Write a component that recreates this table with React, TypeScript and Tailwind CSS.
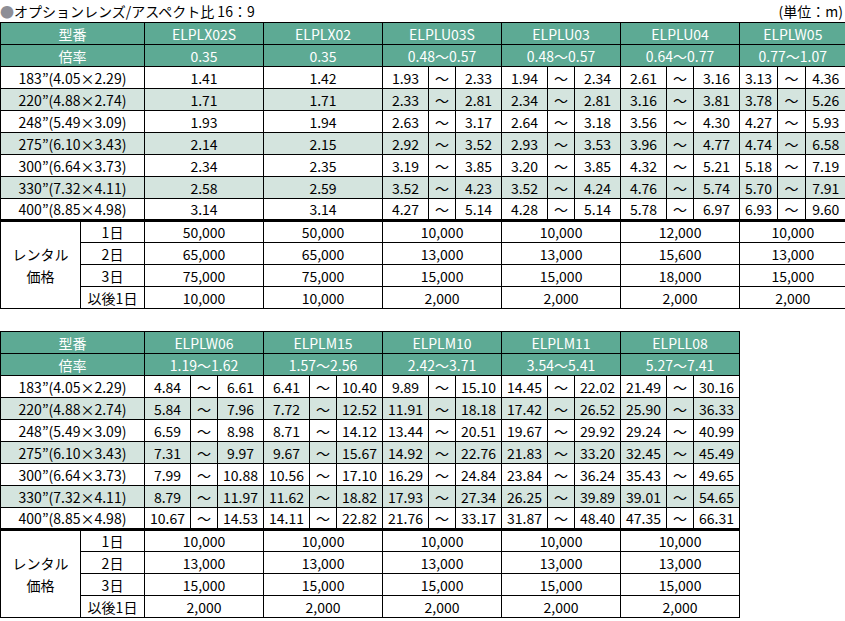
import React from "react";

type Val = string | [string, string];

const t1Models = [
  { name: "ELPLX02S", zoom: "0.35" },
  { name: "ELPLX02", zoom: "0.35" },
  { name: "ELPLU03S", zoom: "0.48〜0.57" },
  { name: "ELPLU03", zoom: "0.48〜0.57" },
  { name: "ELPLU04", zoom: "0.64〜0.77" },
  { name: "ELPLW05", zoom: "0.77〜1.07" },
];

const sizes = [
  "183”(4.05×2.29)",
  "220”(4.88×2.74)",
  "248”(5.49×3.09)",
  "275”(6.10×3.43)",
  "300”(6.64×3.73)",
  "330”(7.32×4.11)",
  "400”(8.85×4.98)",
];

const t1Data: Val[][] = [
  ["1.41", "1.42", ["1.93", "2.33"], ["1.94", "2.34"], ["2.61", "3.16"], ["3.13", "4.36"]],
  ["1.71", "1.71", ["2.33", "2.81"], ["2.34", "2.81"], ["3.16", "3.81"], ["3.78", "5.26"]],
  ["1.93", "1.94", ["2.63", "3.17"], ["2.64", "3.18"], ["3.56", "4.30"], ["4.27", "5.93"]],
  ["2.14", "2.15", ["2.92", "3.52"], ["2.93", "3.53"], ["3.96", "4.77"], ["4.74", "6.58"]],
  ["2.34", "2.35", ["3.19", "3.85"], ["3.20", "3.85"], ["4.32", "5.21"], ["5.18", "7.19"]],
  ["2.58", "2.59", ["3.52", "4.23"], ["3.52", "4.24"], ["4.76", "5.74"], ["5.70", "7.91"]],
  ["3.14", "3.14", ["4.27", "5.14"], ["4.28", "5.14"], ["5.78", "6.97"], ["6.93", "9.60"]],
];

const days = ["1日", "2日", "3日", "以後1日"];

const t1Rent = [
  ["50,000", "50,000", "10,000", "10,000", "12,000", "10,000"],
  ["65,000", "65,000", "13,000", "13,000", "15,600", "13,000"],
  ["75,000", "75,000", "15,000", "15,000", "18,000", "15,000"],
  ["10,000", "10,000", "2,000", "2,000", "2,000", "2,000"],
];

const t2Models = [
  { name: "ELPLW06", zoom: "1.19〜1.62" },
  { name: "ELPLM15", zoom: "1.57〜2.56" },
  { name: "ELPLM10", zoom: "2.42〜3.71" },
  { name: "ELPLM11", zoom: "3.54〜5.41" },
  { name: "ELPLL08", zoom: "5.27〜7.41" },
];

const t2Data: Val[][] = [
  [["4.84", "6.61"], ["6.41", "10.40"], ["9.89", "15.10"], ["14.45", "22.02"], ["21.49", "30.16"]],
  [["5.84", "7.96"], ["7.72", "12.52"], ["11.91", "18.18"], ["17.42", "26.52"], ["25.90", "36.33"]],
  [["6.59", "8.98"], ["8.71", "14.12"], ["13.44", "20.51"], ["19.67", "29.92"], ["29.24", "40.99"]],
  [["7.31", "9.97"], ["9.67", "15.67"], ["14.92", "22.76"], ["21.83", "33.20"], ["32.45", "45.49"]],
  [["7.99", "10.88"], ["10.56", "17.10"], ["16.29", "24.84"], ["23.84", "36.24"], ["35.43", "49.65"]],
  [["8.79", "11.97"], ["11.62", "18.82"], ["17.93", "27.34"], ["26.25", "39.89"], ["39.01", "54.65"]],
  [["10.67", "14.53"], ["14.11", "22.82"], ["21.76", "33.17"], ["31.87", "48.40"], ["47.35", "66.31"]],
];

const t2Rent = [
  ["10,000", "10,000", "10,000", "10,000", "10,000"],
  ["13,000", "13,000", "13,000", "13,000", "13,000"],
  ["15,000", "15,000", "15,000", "15,000", "15,000"],
  ["2,000", "2,000", "2,000", "2,000", "2,000"],
];

const cell = "border border-black text-center align-middle p-0 whitespace-nowrap";
const head = "border border-black text-center align-middle p-0 whitespace-nowrap bg-[#5daa94] text-white";
const rentTop = "border border-black border-t-[3px] border-t-double text-center align-middle p-0 whitespace-nowrap";

function SpecTable({
  models,
  data,
  rent,
  lastNarrow,
}: {
  models: { name: string; zoom: string }[];
  data: Val[][];
  rent: string[][];
  lastNarrow?: boolean;
}) {
  const n = models.length;
  const cols: number[] = [80, 64];
  models.forEach((_, i) => {
    if (lastNarrow && i === n - 1) cols.push(38, 28, 40);
    else cols.push(46, 27, 46);
  });
  const total = cols.reduce((a, b) => a + b, 0);
  const isLast = (i: number) => lastNarrow && i === n - 1;
  return (
    <table
      className="border-collapse table-fixed text-[14px] leading-none text-black"
      style={{ width: total }}
    >
      <colgroup>
        {cols.map((w, i) => (
          <col key={i} style={{ width: w }} />
        ))}
      </colgroup>
      <tbody>
        <tr className="h-[22px]">
          <td colSpan={2} className={head}>
            型番
          </td>
          {models.map((m, i) => (
            <td key={i} colSpan={3} className={isLast(i) ? head + " border-r-0" : head}>
              {m.name}
            </td>
          ))}
        </tr>
        <tr className="h-[22px]">
          <td colSpan={2} className={head}>
            倍率
          </td>
          {models.map((m, i) => (
            <td key={i} colSpan={3} className={isLast(i) ? head + " border-r-0" : head}>
              {m.zoom}
            </td>
          ))}
        </tr>
        {data.map((row, r) => (
          <tr key={r} className={r % 2 === 1 ? "h-[22px] bg-[#d4e4de]" : "h-[22px] bg-white"}>
            <td colSpan={2} className={cell}>
              {sizes[r]}
            </td>
            {row.map((v, i) =>
              typeof v === "string" ? (
                <td key={i} colSpan={3} className={cell}>
                  {v}
                </td>
              ) : (
                <React.Fragment key={i}>
                  <td className={cell}>{v[0]}</td>
                  <td className={cell}>〜</td>
                  <td className={isLast(i) ? cell + " border-r-0" : cell}>{v[1]}</td>
                </React.Fragment>
              )
            )}
          </tr>
        ))}
        {rent.map((row, r) => (
          <tr key={"r" + r} className="h-[22px] bg-white">
            {r === 0 && (
              <td rowSpan={4} className={rentTop + " leading-[22px]"}>
                レンタル
                <br />
                価格
              </td>
            )}
            <td className={r === 0 ? rentTop : cell}>{days[r]}</td>
            {row.map((v, i) => (
              <td
                key={i}
                colSpan={3}
                className={
                  r === 0
                    ? isLast(i)
                      ? rentTop + " border-r-0"
                      : rentTop
                    : isLast(i)
                    ? cell + " border-r-0"
                    : cell
                }
              >
                {v}
              </td>
            ))}
          </tr>
        ))}
      </tbody>
    </table>
  );
}

export default function App() {
  return (
    <div
      className="w-[845px] h-[621px] overflow-hidden bg-white text-black"
      style={{ fontFamily: '"Noto Sans CJK JP", "Noto Sans", sans-serif' }}
    >
      <div className="flex h-[22px] items-center justify-between text-[14px] leading-none">
        <div className="flex items-center">
          <span className="text-[#8e8e96]">●</span>
          <span>オプションレンズ/アスペクト比 16：9</span>
        </div>
        <div className="pr-[2px]">(単位：m)</div>
      </div>
      <SpecTable models={t1Models} data={t1Data} rent={t1Rent} lastNarrow />
      <div className="h-[22px]" />
      <SpecTable models={t2Models} data={t2Data} rent={t2Rent} />
    </div>
  );
}
